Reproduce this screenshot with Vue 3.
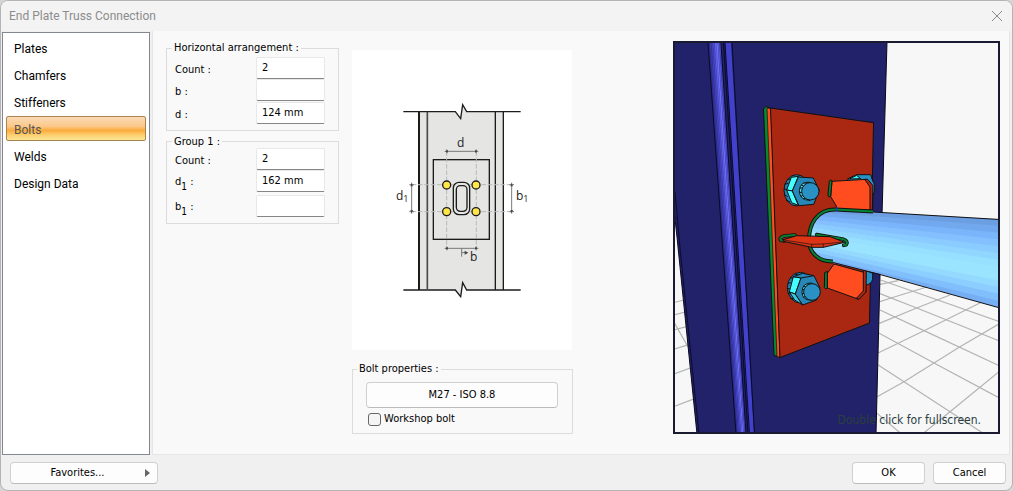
<script setup>
import { ref } from 'vue'

const sections = ['Plates', 'Chamfers', 'Stiffeners', 'Bolts', 'Welds', 'Design Data']
const active = ref('Bolts')
const groups = ref([
  {
    title: 'Horizontal arrangement :',
    rows: [
      { id: 'h-count', label: 'Count', sub: '', value: '2' },
      { id: 'h-b', label: 'b', sub: '', value: '' },
      { id: 'h-d', label: 'd', sub: '', value: '124 mm' }
    ]
  },
  {
    title: 'Group 1 :',
    rows: [
      { id: 'g-count', label: 'Count', sub: '', value: '2' },
      { id: 'g-d1', label: 'd', sub: '1', value: '162 mm' },
      { id: 'g-b1', label: 'b', sub: '1', value: '' }
    ]
  }
])
const workshop = ref(false)

const mix = (a, b, t) => a + (b - a) * t

// Shading bands of the rounded column flange, left to right
const flangeColors = ['#2b2b88', '#3636a4', '#3f3fb8', '#4a4acb', '#5c5ce4', '#6c6cf6', '#5656dc', '#4444c0']
const flange = flangeColors.map((fill, i) => {
  const a = i / flangeColors.length
  const b = (i + 1) / flangeColors.length
  return {
    fill,
    points: `${mix(708, 721, a)},43 ${mix(708, 721, b)},43 ${mix(736, 746, b)},434 ${mix(736, 746, a)},434`
  }
})

// Shading bands of the tube, top to bottom
const tubeColors = ['#6c9fe2', '#72a8ee', '#7ab4fa', '#84c0ff', '#8accff', '#90d6ff', '#97e0ff', '#9be4ff', '#9be4ff', '#94daff', '#8bceff', '#80befc', '#76aef4']
const tube = tubeColors.map((fill, i) => {
  const a = i / tubeColors.length
  const b = (i + 1) / tubeColors.length + 0.01
  return {
    fill,
    points: `806,${mix(207, 258, a)} 1000,${mix(219, 308, a)} 1000,${mix(219, 308, b)} 806,${mix(207, 258, b)}`
  }
})
</script>

<template>
  <div class="window">
    <header class="titlebar">
      <h1>End Plate Truss Connection</h1>
      <button class="close" type="button" aria-label="Close">
        <svg width="12" height="12" viewBox="0 0 12 12"><path d="M1 1L11 11M11 1L1 11" /></svg>
      </button>
    </header>

    <div class="body">
      <nav class="nav">
        <button
          v-for="s in sections"
          :key="s"
          type="button"
          :class="{ selected: s === active }"
          @click="active = s"
        >{{ s }}</button>
      </nav>

      <main class="content">
        <div class="fields">
          <fieldset v-for="(g, i) in groups" :key="g.title" :class="['group', i ? 'second' : 'first']">
            <legend>{{ g.title }}</legend>
            <div v-for="r in g.rows" :key="r.id" class="row">
              <label :for="r.id">{{ r.label }}<sub v-if="r.sub">{{ r.sub }}</sub> :</label>
              <input :id="r.id" v-model="r.value" type="text" />
            </div>
          </fieldset>
        </div>

        <div class="middle">
          <svg class="diagram" viewBox="352 50 220 300" role="img" aria-label="Bolt layout">
            <g transform="translate(380 90) scale(0.33333)" fill="none" stroke="#1c1c1c" stroke-width="4">
              <path d="M116 65H226L240 86L247 44L260 65H370V600H260L247 578L240 620L226 600H116Z" fill="#e5e5e4" stroke="none" />
              <path d="M70 65H226L242 86L248 44L260 65H422M70 600H226L242 620L248 578L260 600H422" />
              <path d="M117 65V600" stroke-width="6" />
              <path d="M142 65V600" stroke-width="5" stroke="#4a4a4a" />
              <path d="M346 65V600M370 65V600" />
              <rect x="160" y="209" width="168" height="239" />
              <g stroke="#b9b9b9" stroke-width="3" stroke-dasharray="14 5">
                <path d="M200 184V475M289 184V475M95 284H395M95 365H395" />
              </g>
              <rect x="220" y="277" width="49" height="97" rx="17" fill="#e5e5e4" />
              <rect x="229" y="287" width="32" height="77" rx="12" />
              <g fill="#ffe74a">
                <circle cx="200" cy="285" r="12" /><circle cx="288" cy="285" r="12" />
                <circle cx="200" cy="365" r="12" /><circle cx="288" cy="365" r="12" />
              </g>
              <g stroke="#777" stroke-width="3">
                <path d="M194 184H295M194 475H295M95 278V371M395 278V371M245 475V500M245 488H258" />
                <path d="M88 284H102M88 365H102M388 284H402M388 365H402M200 178V190M289 178V190M200 469V481M289 469V481" />
              </g>
              <path d="M196 184L204 180V188ZM293 184L285 180V188ZM196 475L204 471V479ZM293 475L285 471V479ZM95 280L91 289H99ZM95 369L91 360H99ZM395 280L391 289H399ZM395 369L391 360H399ZM265 488L254 482V494Z" fill="#444" stroke="none" />
            </g>
            <g class="dims">
              <text x="457" y="147">d</text>
              <text x="470" y="261">b</text>
              <text x="396" y="200">d<tspan class="low" dy="2">1</tspan></text>
              <text x="516" y="200">b<tspan class="low" dy="2">1</tspan></text>
            </g>
          </svg>

          <fieldset class="group props">
            <legend>Bolt properties :</legend>
            <button class="btn wide" type="button">M27 - ISO 8.8</button>
            <label class="check"><input v-model="workshop" type="checkbox" />Workshop bolt</label>
          </fieldset>
        </div>

        <figure class="view">
          <svg viewBox="675 43 323 389" role="img" aria-label="3D model">
            <rect x="675" y="43" width="324" height="390" fill="#f7f7f7" />
            <g fill="none" stroke="#b2b5b1" stroke-width="3.6">
              <g transform="translate(860 220) scale(0.33333)">
                <path d="M62 180L418 305M60 221L170 264L418 363M60 270L192 332L418 437M55 338L222 429L418 534M50 432L132 485L270 575L370 640M45 575L122 640" />
                <path d="M60 193L115 182M60 245L93 234L210 198M58 310L170 264L270 225M54 399L192 332L370 244M50 531L132 485L300 380L418 311M190 640L270 575L418 454" />
              </g>
              <g transform="translate(670 230) scale(0.33333)">
                <path d="M14 217L42 210M14 254L46 246M14 299L50 290M14 357L56 344M14 431L64 413M14 529L74 506M14 280L56 354" />
              </g>
            </g>
            <path d="M674 42H887L882 215L880 275L876 434H697L677 237L674 210Z" fill="#22226a" stroke="#080818" />
            <path d="M675 192L680 248L699 434" fill="none" stroke="#0b0b30" />
            <polygon v-for="(f, i) in flange" :key="'f' + i" :points="f.points" :fill="f.fill" />
            <polygon points="725,43 731,43 754,434 749,434" fill="#4141cc" />
            <path d="M708 43L736 434M721 43L746 434M723.5 43L748 434M725 43L749.5 434M732 43L754.5 434" fill="none" stroke="#0a0a28" />

            <polygon points="763.5,109 766,106.5 770,108 780,357 774,355.5" fill="#068a30" stroke="#101010" />
            <polygon points="767,108 771,108.5 780,357.5 777,356.5" fill="#ff4d20" stroke="#101010" stroke-width="0.7" />
            <polygon points="770.5,108 873.5,122.7 869.5,323 780,357.5" fill="#aa2812" stroke="#101010" />

            <g transform="translate(740 90) scale(0.33333)" stroke="#111" stroke-width="3" stroke-linejoin="round">
              <path d="M322 267L350 254H392L397 270Q410 292 400 315L385 320Z" fill="#2790c4" />
              <path d="M328 267L350 256L362 266Z" fill="#3ff" />
              <ellipse cx="170" cy="301" rx="38" ry="47" fill="#2382ad" />
              <path d="M133 283L145 280M132 298H142M133 314L143 320M138 330L150 336M143 268L154 267" />
              <path d="M154 262L175 259L157 303L140 300Z" fill="#4ff" />
              <path d="M140 300L157 303L175 346L155 338Z" fill="#4ff" />
              <path d="M175 261L220 264L238 301L221 343L177 347L157 303Z" fill="#2787b8" />
              <path d="M210 277Q181 273 178 302Q179 331 210 331Z" fill="#4ae4f2" />
              <path d="M179 294H190M178 307H190M182 319L193 315M184 285L195 290M192 277L199 284M190 327L198 322" />
              <circle cx="211" cy="304" r="26" fill="#2a91c5" />
              <path d="M276 274L380 268L398 288V361L290 358L289 348L272 320Z" fill="#ff4d20" />
              <path d="M374 268H383L399 287L397 361H390V291Z" fill="#ad2914" />
              <path d="M268 273Q274 266 276 273L272 319Q265 324 264 315Z" fill="#08802e" />
            </g>

            <g transform="translate(740 220) scale(0.33333)" stroke="#111" stroke-width="3" stroke-linejoin="round">
              <path d="M375 150L398 160V178Q393 194 376 196Z" fill="#2790c4" />
              <ellipse cx="181" cy="203" rx="39" ry="46" fill="#2382ad" />
              <path d="M144 190L153 188M142 206H149M145 221L153 222M151 235L162 236M152 175L164 172M164 162L174 165" />
              <path d="M160 170L183 174L166 222L148 216Z" fill="#4ff" />
              <path d="M148 216L166 222L188 255L164 240Z" fill="#38c8df" />
              <path d="M160 170L188 160L222 167L240 204L230 240L188 255L166 222L183 174Z" fill="#2787b8" />
              <path d="M183 174L222 167" fill="none" />
              <path d="M215 189Q186 188 186 217Q187 241 213 240Z" fill="#4ae4f2" />
              <path d="M187 208L196 209M186 220H195M190 232L200 228M191 198L202 203M201 191L208 198" />
              <circle cx="216" cy="216" r="25" fill="#2a91c5" />
              <path d="M282 132L375 158L378 215L356 238L262 204V160Z" fill="#ff4d20" />
              <path d="M370 150H379L378 216L357 238L349 235L370 213Z" fill="#ad2914" />
              <path d="M254 158L262 154V204L257 207L253 203Z" fill="#08802e" />
            </g>

            <clipPath id="tube-shape">
              <path d="M1000 219L873 212L836 210C817 209 809 224 809 240C809 253 819 262 833 263L880 274L1000 308Z" />
            </clipPath>
            <g clip-path="url(#tube-shape)">
              <polygon v-for="(t, i) in tube" :key="'t' + i" :points="t.points" :fill="t.fill" />
            </g>
            <path d="M873 212L1000 219.5M833 262.5L880 274.5L1000 308" fill="none" stroke="#111" />
            <path d="M873 211.500L836 209.500C817 209 809 224 809 240C809 253 819 262 833 261.500" fill="none" stroke="#111" stroke-width="4" />
            <path d="M873 211.500L836 209.500C817 209 809 224 809 240C809 253 819 262 833 261.500" fill="none" stroke="#078133" stroke-width="2" />
            <path d="M836.500 207V211" stroke="#2020ff" />

            <g transform="translate(740 220) scale(0.33333)" fill="none" stroke-linejoin="round" stroke-linecap="round">
              <path d="M165 45L132 48Q116 54 123 61L132 63M230 44L308 57Q326 62 319 74L311 76" stroke="#111" stroke-width="11" />
              <path d="M165 45L132 48Q116 54 123 61L132 63M230 44L308 57Q326 62 319 74L311 76" stroke="#078133" stroke-width="6" />
              <path d="M130 59L170 47L270 50L314 67L250 82H215L130 64Z" fill="#dc3515" stroke="#111" stroke-width="3" />
              <path d="M130 60L215 73L250 72L310 66M215 73V82M250 72V82" stroke="#111" stroke-width="2" />
            </g>
          </svg>
          <figcaption>Double click for fullscreen.</figcaption>
        </figure>
      </main>
    </div>

    <footer class="footer">
      <button class="btn favorites" type="button">
        <span>Favorites...</span>
        <svg width="5" height="8" viewBox="0 0 5 8"><path d="M0 0L5 4L0 8Z" fill="#666" /></svg>
      </button>
      <button class="btn action" type="button">OK</button>
      <button class="btn action" type="button">Cancel</button>
    </footer>
  </div>
</template>

<style>
body {
  margin: 0;
  background: #d5d5d5;
}
</style>

<style scoped>
.window {
  box-sizing: border-box;
  min-height: 100vh;
  display: flex;
  flex-direction: column;
  border: 1px solid #b4b4b4;
  border-radius: 8px;
  overflow: hidden;
  background: #f0f0f0;
  color: #000;
  font: 11px/14px "DejaVu Sans Condensed", "Noto Sans", sans-serif;
}
button,
input {
  font: inherit;
  color: inherit;
}
.titlebar {
  display: flex;
  align-items: center;
  justify-content: space-between;
  height: 30px;
  padding: 0 7px 0 8px;
  background: #f3f3f3;
}
h1 {
  margin: 0;
  font: 12px/16px Roboto, sans-serif;
  color: #8c8c8c;
}
.close {
  display: flex;
  padding: 2px;
  border: 0;
  background: none;
}
.close path {
  stroke: #888;
  fill: none;
}
.body {
  flex: 1;
  display: flex;
  gap: 2px;
  padding: 0 2px 0 1px;
}
.nav {
  box-sizing: border-box;
  flex: none;
  width: 148px;
  display: flex;
  flex-direction: column;
  gap: 2px;
  margin-top: 1px;
  padding: 2px 3px;
  border: 1px solid #828790;
  background: #fff;
}
.nav button {
  box-sizing: border-box;
  height: 25px;
  padding: 2px 7px 0;
  border: 1px solid transparent;
  border-radius: 2px;
  background: none;
  text-align: left;
  font: 12px/16px Roboto, sans-serif;
}
.nav .selected {
  border-color: #a8854f;
  background: linear-gradient(#fbd9b5, #fcc98c 40%, #fbab3b 58%, #fdd174 80%, #fee594);
  color: #555;
}
.content {
  flex: 1;
  display: flex;
  align-items: flex-start;
  gap: 13px;
  padding: 10px 9px 20px 13px;
  border: solid #e6e6e6;
  border-width: 0 1px 1px;
  background: #f9f9f9;
}
.fields {
  flex: none;
  width: 173px;
}
.group {
  position: relative;
  box-sizing: border-box;
  margin: 0;
  border: 1px solid #dcdcdc;
  min-width: 0;
}
.group legend {
  margin-left: -2px;
  padding: 0 2px;
  line-height: 14px;
}
.first {
  padding: 2px 13px 6px 7px;
}
.second {
  margin-top: 4px;
  padding: 0 13px 6px 7px;
}
.second legend {
  line-height: 13px;
}
.row {
  display: flex;
  align-items: center;
  justify-content: space-between;
}
.first .row:last-child {
  margin-top: 1px;
}
.second .row:last-child {
  margin-top: 3px;
}
.row label {
  padding: 3px 0 0 1px;
}
.row sub {
  font-size: 10px;
  line-height: 8px;
  vertical-align: -5px;
}
.row input {
  box-sizing: border-box;
  width: 69px;
  height: 22px;
  padding: 0 5px 2px;
  border: 1px solid #e8e8e8;
  border-bottom-color: #868686;
  border-radius: 2px;
  background: #fff;
}
.middle {
  flex: none;
  width: 221px;
}
.diagram {
  display: block;
  width: 220px;
  margin-top: 9px;
  background: #fff;
}
.dims {
  font: 12px "Open Sans", sans-serif;
  fill: #222;
}
.low {
  font-size: 9px;
}
.props {
  margin-top: 12px;
  padding: 6px 14px 6px 6px;
}
.btn {
  box-sizing: border-box;
  height: 22px;
  padding: 0 8px;
  border: 1px solid #d0d0d0;
  border-bottom-color: #bcbcbc;
  border-radius: 4px;
  background: #fdfdfd;
}
.wide {
  display: block;
  width: calc(100% - 7px);
  height: 26px;
  margin-left: 7px;
}
.check {
  display: flex;
  align-items: center;
  gap: 3px;
  margin: 4px 0 1px 9px;
}
.check input {
  appearance: none;
  box-sizing: border-box;
  width: 13px;
  height: 13px;
  margin: 0;
  border: 1px solid #666;
  border-radius: 3px;
  background: #f5f5f5;
}
.check input:checked {
  background: #0067c0;
}
.view {
  position: relative;
  box-sizing: border-box;
  flex: 0 1 327px;
  margin: 0 0 0 auto;
  border: 2px solid #1a1a30;
}
.view svg {
  display: block;
  width: 100%;
}
figcaption {
  position: absolute;
  right: 17px;
  bottom: 3px;
  font-size: 12px;
  line-height: 18px;
  color: #29403f;
}
.footer {
  display: flex;
  align-items: center;
  gap: 8px;
  padding: 7px 6px 6px 9px;
}
.favorites {
  display: flex;
  align-items: center;
  width: 148px;
  margin-right: auto;
  padding: 0 7px;
}
.favorites span {
  flex: 1;
  padding-right: 8px;
  text-align: center;
}
.action {
  width: 73px;
}
</style>
